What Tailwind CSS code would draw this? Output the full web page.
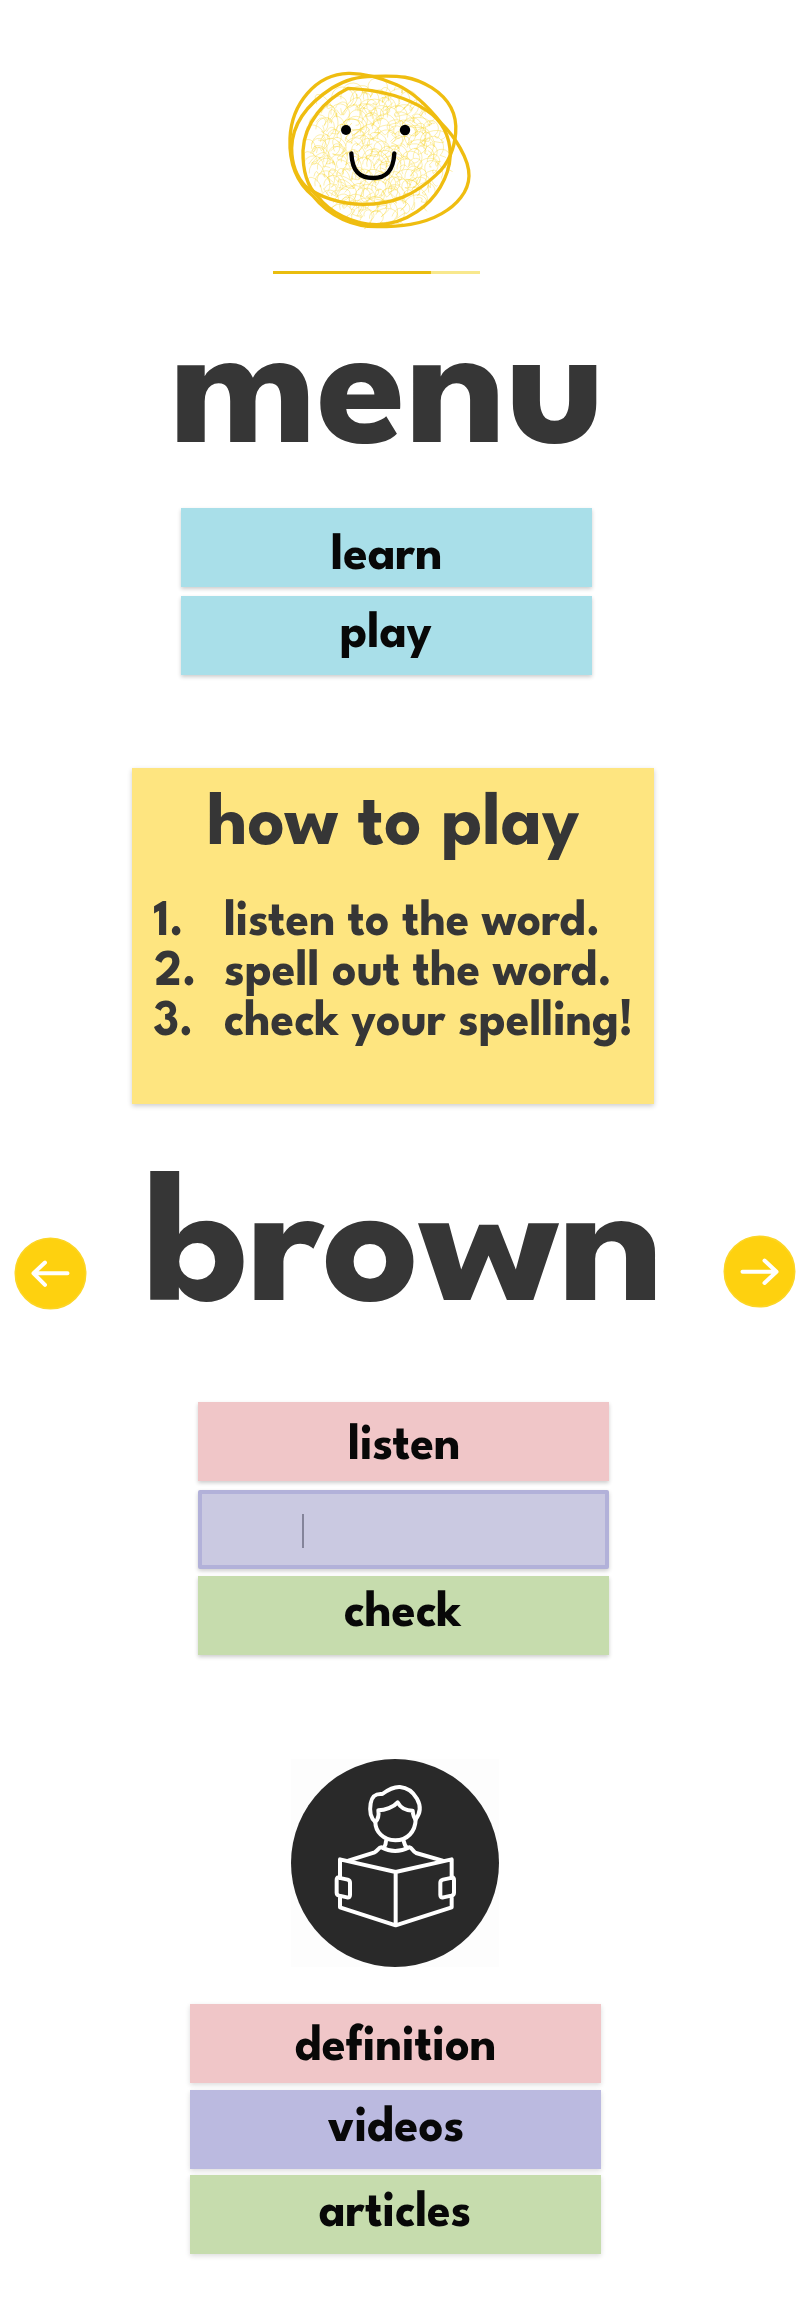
<!DOCTYPE html>
<html lang="en">
<head>
<meta charset="utf-8">
<title>menu</title>
<script src="https://cdn.jsdelivr.net/npm/@tailwindcss/browser@4"></script>
</head>
<body class="bg-white">
<main class="flex h-[2322px] w-[812px] flex-col items-start font-['League_Spartan',Lato,sans-serif] font-bold">

  <!-- smiling scribble -->
  <svg class="mt-[50px] ml-[260px] h-[200px] w-60 shrink-0" viewBox="0 0 720 600" fill="none" stroke-linecap="round" stroke-linejoin="round">
    <path id="scribble" stroke="#f7d42c" stroke-width="1.7" stroke-opacity=".68"/>
    <g stroke="#efbd10" stroke-width="10">
      <path d="M265 70C312 69 363 84 410 104C462 127 505 170 545 221C583 259 628 326 627 378C626 425 590 466 545 491C485 525 421 530 350 530C283 530 211 503 159 438C109 397 87 338 90 265C94 163 167 72 265 70Z"/>
      <path d="M340 79C417 76 458 78 515 113C565 145 592 188 587 249C584 291 566 342 530 373C463 437 396 463 310 463C239 463 177 440 137 409C108 379 95 338 95 294C97 206 165 147 216 114C258 88 293 80 340 79Z"/>
      <path d="M265 115C345 119 434 137 500 181C550 214 570 265 571 315C568 384 526 448 471 485C431 512 390 524 350 524C278 524 208 486 172 438C137 404 128 352 129 302C133 218 194 150 265 115Z"/>
    </g>
    <circle cx="258" cy="240" r="15" fill="#000"/>
    <circle cx="435" cy="240" r="15.5" fill="#000"/>
    <path stroke="#000" stroke-width="13" d="M274 310C277 363 297 384 340 384C381 384 400 360 403 310"/>
  </svg>

  <!-- progress -->
  <div class="mt-[21px] ml-[273px] flex h-[3px] w-[207px] shrink-0 bg-[#f8e88d]"><div class="w-[158px] bg-[#e9bd0f]"></div></div>

  <h1 class="mt-[26px] h-[200px] w-full shrink-0">
    <svg class="block size-full overflow-visible" viewBox="0 300 812 200"><text x="169.8" y="442" textLength="435.6" lengthAdjust="spacingAndGlyphs" font-size="187" fill="#363636">menu</text></svg>
  </h1>

  <nav class="mt-2 ml-[181px] flex w-[411px] shrink-0 flex-col gap-[9px]">
    <button class="h-[79px] bg-[#a9dfe9] shadow-[0_2px_4px_rgba(0,0,0,0.2)]"><svg class="block size-full" viewBox="181 508 411 79"><text x="330.8" y="569" textLength="111.5" lengthAdjust="spacingAndGlyphs" font-size="51" fill="#080808">learn</text></svg></button>
    <button class="h-[79px] bg-[#a9dfe9] shadow-[0_2px_4px_rgba(0,0,0,0.2)]"><svg class="block size-full" viewBox="181 596 411 79"><text x="339.8" y="646.7" textLength="92" lengthAdjust="spacingAndGlyphs" font-size="51" fill="#080808">play</text></svg></button>
  </nav>

  <section class="mt-[93px] ml-[132px] h-[336px] w-[522px] shrink-0 bg-[#fee580] shadow-[0_2px_5px_rgba(0,0,0,0.2)]">
    <svg class="block size-full" viewBox="132 768 522 336" fill="#363636">
      <text x="207" y="844" textLength="372.5" lengthAdjust="spacingAndGlyphs" font-size="76">how to play</text>
      <g font-size="51">
        <text x="153.6" y="935" textLength="30" lengthAdjust="spacingAndGlyphs">1.</text>
        <text x="223.9" y="935" textLength="376.5" lengthAdjust="spacingAndGlyphs">listen to the word.</text>
        <text x="154.5" y="985" textLength="42" lengthAdjust="spacingAndGlyphs">2.</text>
        <text x="224.2" y="985" textLength="387.8" lengthAdjust="spacingAndGlyphs">spell out the word.</text>
        <text x="153.5" y="1035" textLength="40" lengthAdjust="spacingAndGlyphs">3.</text>
        <text x="223.8" y="1035" textLength="409.5" lengthAdjust="spacingAndGlyphs">check your spelling!</text>
      </g>
    </svg>
  </section>

  <!-- current word with previous and next -->
  <section class="mt-[16px] flex h-[210px] w-full shrink-0 items-start">
    <button class="mt-[117px] ml-[14px] size-[73px] shrink-0" aria-label="previous">
      <svg class="block size-full" viewBox="0 0 73 73" fill="none" stroke-linecap="round" stroke-linejoin="round"><circle cx="36.5" cy="36.5" r="35.2" fill="#fed10f" stroke="#fcd526" stroke-width="1.6"/><path d="M53.5 36.3H19.5M31 25.5L19.5 36.3L31 47.8" stroke="#fff" stroke-width="4"/></svg>
    </button>
    <h2 class="h-[210px] w-[636px] shrink-0"><svg class="block size-full overflow-visible" viewBox="87 1120 636 210"><text x="142.8" y="1300" textLength="521" lengthAdjust="spacingAndGlyphs" font-size="187" fill="#363636">brown</text></svg></h2>
    <button class="mt-[115px] size-[73px] shrink-0" aria-label="next">
      <svg class="block size-full" viewBox="0 0 73 73" fill="none" stroke-linecap="round" stroke-linejoin="round"><circle cx="36.5" cy="36.5" r="35.2" fill="#fed10f" stroke="#fcd526" stroke-width="1.6"/><path d="M19.5 36.8H53.5M41.5 25.5L53.5 36.8L41.5 48" stroke="#fff" stroke-width="4"/></svg>
    </button>
  </section>

  <section class="mt-[72px] ml-[198px] flex w-[411px] shrink-0 flex-col">
    <button class="h-[79px] bg-[#f0c6c8] shadow-[0_2px_4px_rgba(0,0,0,0.2)]"><svg class="block size-full" viewBox="198 1402 411 79"><text x="348" y="1459" textLength="112.4" lengthAdjust="spacingAndGlyphs" font-size="51" fill="#080808">listen</text></svg></button>
    <div class="mt-[9px] h-[79px] rounded-[2px] border-4 border-[#b2b1d9] bg-[#cac9e1] pt-5 pl-[100px] shadow-[0_2px_4px_rgba(0,0,0,0.2)]"><div class="h-[34px] w-0.5 bg-[#84849a]"></div></div>
    <button class="mt-[7px] h-[79px] bg-[#c6dcad] shadow-[0_2px_4px_rgba(0,0,0,0.2)]"><svg class="block size-full" viewBox="198 1576 411 79"><text x="343.7" y="1626" textLength="117.7" lengthAdjust="spacingAndGlyphs" font-size="51" fill="#080808">check</text></svg></button>
  </section>

  <!-- reader -->
  <svg class="mt-[104px] ml-[291px] size-[208px] shrink-0 bg-[#fdfdfd]" viewBox="33 57 624 624" fill="none" stroke="#fff" stroke-width="12" stroke-linejoin="round" stroke-linecap="round">
    <circle cx="345" cy="369" r="312" fill="#292929" stroke="none"/>
    <path d="M286 246C270 232 269 207 272 190C276 168 286 160 307 162C327 147 344 140 360 141C385 143 401 159 411 176C424 199 422 219 406 239"/>
    <path d="M286 246C295 238 297 225 295 211C315 211 340 202 353 187C362 204 378 212 398 212C399 225 401 232 407 239C406 275 382 301 346 301C309 301 286 274 286 246Z"/>
    <path d="M318 303C318 312 315 319 311 324M371 303C373 312 376 319 381 324"/>
    <path d="M205 362L284 337C292 333 296 322 304 322C330 336 361 336 388 322C397 323 398 335 408 339L488 362"/>
    <path d="M180 414V358L347 396L515 358V414M180 473V502L347 556L515 502V473M347 396V556"/>
    <path d="M175 413L203 419Q210 421 210 428V465Q210 474 201 472L178 467Q170 465 170 458V420Q170 412 175 413ZM517 413L489 419Q481 421 481 428V465Q481 474 490 472L514 467Q522 465 522 458V420Q522 412 517 413Z"/>
  </svg>

  <nav class="mt-[37px] ml-[190px] flex w-[411px] shrink-0 flex-col">
    <button class="h-[79px] bg-[#f0c6c8] shadow-[0_2px_5px_rgba(0,0,0,0.14)]"><svg class="block size-full" viewBox="190 2004 411 79"><text x="294.7" y="2060" textLength="201.7" lengthAdjust="spacingAndGlyphs" font-size="51" fill="#080808">definition</text></svg></button>
    <button class="mt-[7px] h-[79px] bg-[#bbbae0] shadow-[0_2px_5px_rgba(0,0,0,0.14)]"><svg class="block size-full" viewBox="190 2090 411 79"><text x="327.8" y="2141" textLength="136.7" lengthAdjust="spacingAndGlyphs" font-size="51" fill="#080808">videos</text></svg></button>
    <button class="mt-[6px] h-[79px] bg-[#c6dcad] shadow-[0_2px_5px_rgba(0,0,0,0.14)]"><svg class="block size-full" viewBox="190 2175 411 79"><text x="318.8" y="2226" textLength="152.5" lengthAdjust="spacingAndGlyphs" font-size="51" fill="#080808">articles</text></svg></button>
  </nav>
</main>
<script>
  // Fills the face with loose curls: overlapping ellipses joined by short strokes.
  let seed = 7;
  const rnd = () => (seed = (seed * 16807) % 2147483647) / 2147483647;
  let d = '';
  for (let i = 0; i < 200; i++) {
    const a = i * 2.39996, q = Math.sqrt((i + .5) / 200);
    const rx = 12 + rnd() * 22, ry = 12 + rnd() * 22;
    const x = 342 + Math.cos(a) * q * 198 + (rnd() - .5) * 14;
    const y = 310 + Math.sin(a) * q * 202 + (rnd() - .5) * 14;
    const t = rnd() * 180;
    d += `M${x - rx} ${y}a${rx} ${ry} ${t} 1 1 ${rx * 1.5} ${ry * .7}q${(rnd() - .5) * 50} ${(rnd() - .5) * 50} ${(rnd() - .5) * 50} ${(rnd() - .5) * 40}`;
  }
  document.getElementById('scribble').setAttribute('d', d);
</script>
</body>
</html>
